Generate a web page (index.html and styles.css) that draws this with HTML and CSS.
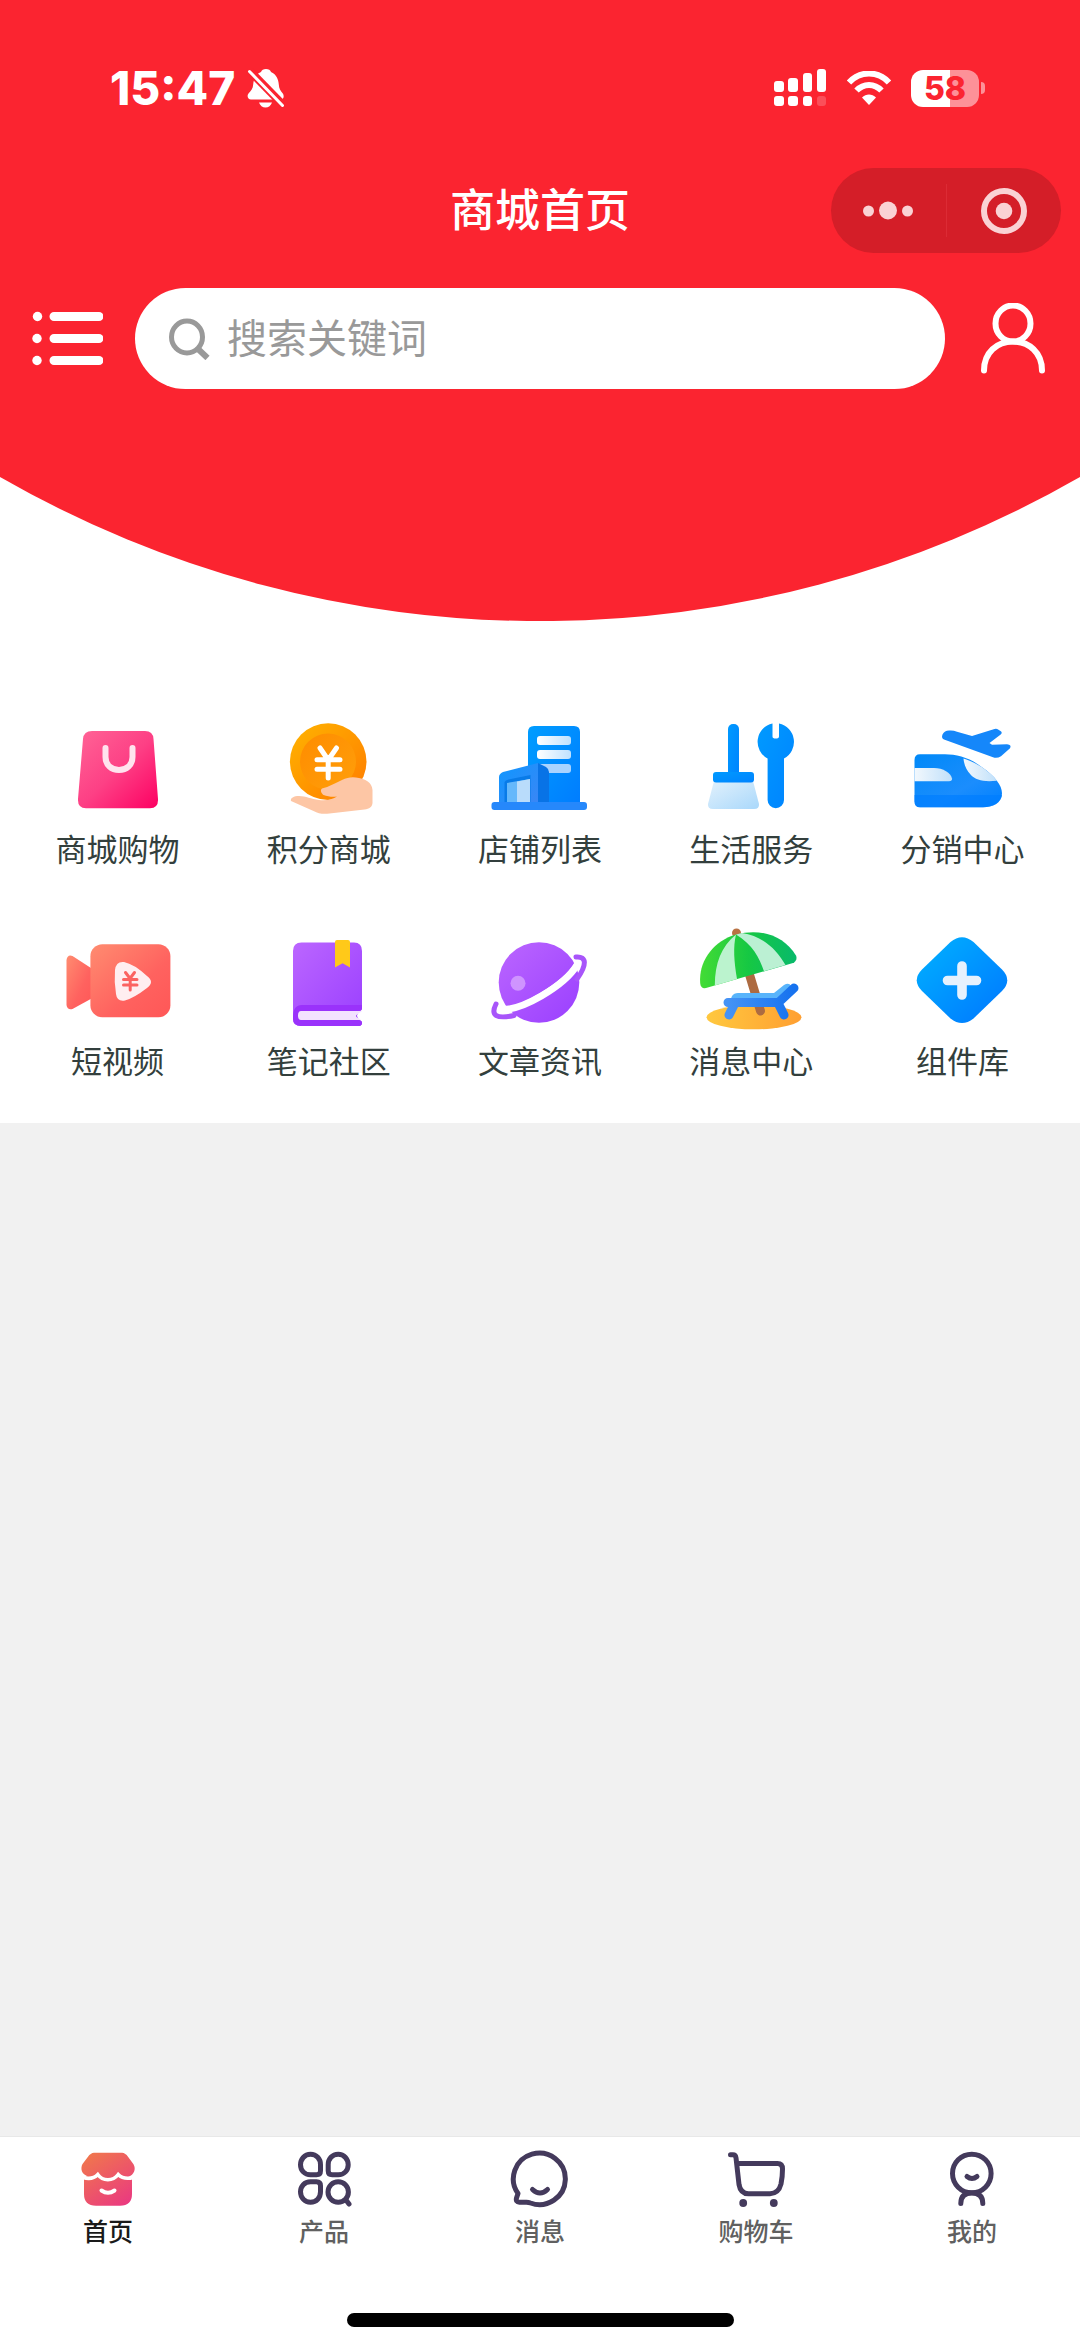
FILE: index.html
```html
<!DOCTYPE html>
<html lang="zh-CN">
<head>
    <meta charset="UTF-8">
    <meta name="viewport" content="width=device-width, initial-scale=1.0">
    <title>商城首页</title>
    <link rel="stylesheet" href="styles.css">
</head>
<body>
    <header class="hero">
        <div class="status-bar">
            <div class="status-left">
                <span class="time">15:47</span>
                <svg class="bell" viewBox="0 0 38 40">
                    <path d="M19 1c2.500 0 4.500 1.200 5 3 5 2 7.500 7 7.800 12.500.2 4 1.700 6.500 4 9 1.500 1.700 1.200 6-2 6H4c-3 0-4.500-3.500-2.500-6 2.500-2.800 4.500-5 4.700-9C6.500 11 9 6 14 4c.5-1.800 2.500-3 5-3zM12 34.500h13c-1 3-3.500 5-6.500 5s-5.500-2-6.500-5z" fill="#fff"/>
                    <path d="M1 1l38 39" stroke="#fb2430" stroke-width="8"/>
                    <path d="M2.500 3.500l33 34" stroke="#fff" stroke-width="3" stroke-linecap="round"/>
                </svg>
            </div>
            <div class="status-right">
                <svg class="signal" viewBox="0 0 53 38" fill="#fff">
                    <rect x="0" y="12" width="10" height="11" rx="3"/>
                    <rect x="14" y="9" width="10" height="14" rx="3"/>
                    <rect x="29" y="4" width="9" height="19" rx="3"/>
                    <rect x="43" y="0" width="9" height="23" rx="3"/>
                    <rect x="0" y="27" width="10" height="10" rx="3"/>
                    <rect x="14" y="27" width="10" height="10" rx="3"/>
                    <rect x="29" y="27" width="9" height="10" rx="3"/>
                    <rect x="43" y="27" width="9" height="10" rx="3" opacity=".2"/>
                </svg>
                <svg class="wifi" viewBox="0 0 46 34">
                    <path d="M3 11.500C14-.5 32-.5 43 11.500" fill="none" stroke="#fff" stroke-width="6"/>
                    <path d="M10.500 19.500C17.500 12 28.500 12 35.500 19.500" fill="none" stroke="#fff" stroke-width="6"/>
                    <path d="M23 34l-7-7.500c4-4 10-4 14 0z" fill="#fff"/>
                </svg>
                <div class="battery"><span class="battery-body">58</span><span class="battery-tip"></span></div>
            </div>
        </div>

        <div class="nav-bar">
            <h1 class="nav-title">商城首页</h1>
            <div class="capsule">
                <button class="capsule-btn" type="button" aria-label="更多">
                    <svg width="50" height="48" viewBox="0 0 50 48" fill="#fad2d4">
                        <circle cx="5.500" cy="24" r="5.500"/><circle cx="25" cy="23.500" r="9"/><circle cx="44.500" cy="24" r="5.500"/>
                    </svg>
                </button>
                <button class="capsule-btn" type="button" aria-label="关闭">
                    <svg width="48" height="48" viewBox="0 0 48 48">
                        <circle cx="24" cy="24" r="20" fill="none" stroke="#fad2d4" stroke-width="6"/>
                        <circle cx="24" cy="24" r="8.300" fill="#fad2d4"/>
                    </svg>
                </button>
            </div>
        </div>

        <div class="search-row">
            <button class="icon-btn" type="button" aria-label="分类">
                <svg width="72" height="72" viewBox="0 0 72 72" fill="#fff">
                    <circle cx="6.500" cy="13.500" r="4.700"/><circle cx="6" cy="35.500" r="4.700"/><circle cx="6" cy="57.500" r="4.700"/>
                    <path d="M23 13.500h45M23 35.500h45M23 57.500h45" stroke="#fff" stroke-width="9" stroke-linecap="round"/>
                </svg>
            </button>
            <label class="search-box">
                <svg class="search-icon" viewBox="0 0 42 42" fill="none" stroke="#999" stroke-width="5">
                    <ellipse cx="18" cy="19" rx="15.500" ry="16"/>
                    <path d="M28 30l10.500 10" stroke-width="6"/>
                </svg>
                <input class="search-input" type="search" placeholder="搜索关键词" aria-label="搜索关键词">
            </label>
            <button class="icon-btn" type="button" aria-label="个人中心">
                <svg width="72" height="72" viewBox="0 0 72 72" fill="none" stroke="#fff" stroke-width="6" stroke-linecap="round">
                    <ellipse cx="36" cy="20.500" rx="17.500" ry="18"/>
                    <path d="M7 67.500c0-18 13-29 29-29s29 11 29 29"/>
                </svg>
            </button>
        </div>
    </header>
    <svg class="hero-curve" viewBox="0 0 1080 144"><path d="M0 0A1084 1084 0 0 0 1080 0z" fill="#fb2430"/></svg>

    <nav class="menu">
        <a class="menu-item" href="#">
            <svg class="menu-icon" viewBox="0 0 108 108">
                <defs><linearGradient id="bag" x1="0" y1="0" x2="1" y2="1"><stop offset="0" stop-color="#ff6496"/><stop offset=".5" stop-color="#fd4085"/><stop offset="1" stop-color="#fd0062"/></linearGradient></defs>
                <path d="M28 16h53q8 0 8.500 8L94 84q.5 9-8 9.300H22q-8.500-.3-8-9.300L19 24q.7-8 9-8z" fill="url(#bag)"/>
                <path d="M41.500 33v9c0 8 6 13 13.500 13s13.500-5 13.500-13v-9" fill="none" stroke="#ffe3ee" stroke-width="6" stroke-linecap="round"/>
            </svg>
            <span class="menu-text">商城购物</span>
        </a>
        <a class="menu-item" href="#">
            <svg class="menu-icon" viewBox="0 0 108 108">
                <defs>
                    <linearGradient id="coin" x1="0" y1="0" x2="1" y2="1"><stop offset="0" stop-color="#ffb400"/><stop offset="1" stop-color="#ff7b00"/></linearGradient>
                    <linearGradient id="coinIn" x1="0" y1="0" x2="1" y2="1"><stop offset="0" stop-color="#ff8c00"/><stop offset="1" stop-color="#ff9f0a"/></linearGradient>
                </defs>
                <circle cx="53.200" cy="46.600" r="38.300" fill="url(#coin)"/>
                <circle cx="53" cy="46.600" r="28" fill="url(#coinIn)"/>
                <path d="M45 33l8.200 12L61.500 33M42 44.700h23M42 54.300h23M53.200 45v18" fill="none" stroke="#fff" stroke-width="5" stroke-linecap="round" stroke-linejoin="round"/>
                <path d="M16 86c-1-3 3-5 8-5 7 0 12 3 20 4 7 .8 14-.5 18-3.500-4 .5-9 .3-13.500-1.500-2.500-2-3.500-5-1.500-6.500C54 72 60 68 67 65c6-3 11-3.500 17-2 6 1 13 4 13.500 12V88c-.5 4-3 6-8 6.500l-35 4c-6 .7-11 .3-16-2.500z" fill="#fdc6a5"/>
            </svg>
            <span class="menu-text">积分商城</span>
        </a>
        <a class="menu-item" href="#">
            <svg class="menu-icon" viewBox="0 0 108 108">
                <defs>
                    <linearGradient id="tower" x1="0" y1="0" x2="1" y2="1"><stop offset="0" stop-color="#009dff"/><stop offset="1" stop-color="#007dff"/></linearGradient>
                    <linearGradient id="slat" x1="0" y1="0" x2="1" y2="0"><stop offset="0" stop-color="#fff"/><stop offset="1" stop-color="#bfe1ff"/></linearGradient>
                    <linearGradient id="front" x1="0" y1="0" x2="1" y2="1"><stop offset="0" stop-color="#0d97ff"/><stop offset="1" stop-color="#3b86f5"/></linearGradient>
                </defs>
                <path d="M42 88V17q0-6 6-6h40q6 0 6 6v71z" fill="url(#tower)"/>
                <rect x="51" y="21" width="34" height="9" rx="3" fill="url(#slat)"/>
                <rect x="51" y="35" width="34" height="9" rx="3" fill="url(#slat)"/>
                <rect x="51" y="49" width="34" height="9" rx="3" fill="#a9d3ff"/>
                <path d="M52 48l8 4q3 2 3 5v31H52z" fill="#0873e6"/>
                <path d="M13 88V62q0-3 4-5l35-9v40z" fill="url(#front)"/>
                <path d="M18.500 87V67q1-2 4-2.500l22-4.500v27z" fill="#087be8"/>
                <path d="M21 87V68l23-4v23z" fill="#65b8fb"/>
                <path d="M31 87V66.500l13-2.500v23z" fill="#b9dcfb"/>
                <rect x="5.500" y="87" width="95.500" height="8" rx="3" fill="#2688fb"/>
            </svg>
            <span class="menu-text">店铺列表</span>
        </a>
        <a class="menu-item" href="#">
            <svg class="menu-icon" viewBox="0 0 108 108">
                <defs>
                    <linearGradient id="tool" x1="0" y1="0" x2="1" y2="1"><stop offset="0" stop-color="#009aff"/><stop offset="1" stop-color="#0083ff"/></linearGradient>
                    <linearGradient id="brush" x1="0" y1="0" x2="1" y2="1"><stop offset="0" stop-color="#e2f1fc"/><stop offset="1" stop-color="#a9d8fb"/></linearGradient>
                </defs>
                <path d="M17 66h39l6 23q.5 5-5 5H16q-5.500 0-5-5z" fill="url(#brush)"/>
                <rect x="31" y="9" width="11" height="55" rx="5" fill="url(#tool)"/>
                <rect x="16" y="57" width="41" height="10.500" rx="3" fill="url(#tool)"/>
                <path d="M75.500 8.500v13q0 2 3.200 2t3.300-2v-13A18.800 18.800 0 0 1 87 43.500V85a8.200 8.200 0 0 1-16.400 0V43.500A18.800 18.800 0 0 1 75.500 8.500z" fill="url(#tool)"/>
            </svg>
            <span class="menu-text">生活服务</span>
        </a>
        <a class="menu-item" href="#">
            <svg class="menu-icon" viewBox="0 0 108 108">
                <defs>
                    <linearGradient id="train" x1="0" y1="0" x2="1" y2="1"><stop offset="0" stop-color="#0089f8"/><stop offset=".6" stop-color="#1b8dfd"/><stop offset="1" stop-color="#0080ff"/></linearGradient>
                    <linearGradient id="glass" x1="0" y1="0" x2="1" y2="0"><stop offset="0" stop-color="#f2f8fd"/><stop offset="1" stop-color="#c0e0fa"/></linearGradient>
                </defs>
                <path d="M12 39.300h25c12 0 26 4 37 13 13 9 20 18 20 26 0 9-9 14-19 14H12q-5.500 0-5.500-6V45q0-5.700 5.500-5.700z" fill="url(#train)"/>
                <path d="M6.500 80H94c-1 8-9 12.300-19 12.300H12q-5.500 0-5.500-6z" fill="#007dff" opacity=".7"/>
                <path d="M6.500 53H26c9 0 17 5 18 10.500q.3 2.800-3 2.800H6.500z" fill="url(#glass)"/>
                <path d="M55.500 43.500c9 3 23 9 33.500 22.200-13 1.300-21-.2-26.500-6.200-4-4.500-6.500-9.500-7-16z" fill="url(#glass)"/>
                <path d="M36 24.500q-3-1.500-1.500-5 2-4 6.500-4 4-.5 8 1.200l15 4.300 22.500-7q2-.8 4 .8l2.700 1.700q1.500 1.500-.5 3L81.500 28l2.500 1.800L99 29.300q5 .5 3 4l-9 8q-4 2.400-8 1z" fill="#1587fa"/>
            </svg>
            <span class="menu-text">分销中心</span>
        </a>
        <a class="menu-item" href="#">
            <svg class="menu-icon" viewBox="0 0 108 108">
                <defs><linearGradient id="video" x1="0" y1="0" x2="1" y2="1"><stop offset="0" stop-color="#ff8c70"/><stop offset=".6" stop-color="#ff625f"/><stop offset="1" stop-color="#ff5757"/></linearGradient></defs>
                <path d="M2.500 33q1-6 6-4l20 13v29l-20 11q-5 1.500-6-4z" fill="url(#video)"/>
                <rect x="26.400" y="17.300" width="80" height="73" rx="12" fill="url(#video)"/>
                <path d="M51 43q1-9 9-8 10 2 23 14 8 6 0 12-13 10-22 12.500-8 1.500-9-6.500-2-12-1-24z" fill="#ffeef0"/>
                <path d="M61.500 45.500l4.500 6 4.500-6M59.500 52.500h13.500M59.500 58h13.500M66.200 52v11" fill="none" stroke="#fb6361" stroke-width="3" stroke-linecap="round"/>
            </svg>
            <span class="menu-text">短视频</span>
        </a>
        <a class="menu-item" href="#">
            <svg class="menu-icon" viewBox="0 0 108 108">
                <defs><linearGradient id="book" x1="0" y1="0" x2="1" y2="1"><stop offset="0" stop-color="#bb66ff"/><stop offset="1" stop-color="#9a3fff"/></linearGradient></defs>
                <path d="M18 88V24q0-8.500 8.500-8.500H79q8 0 8 8.500v57q0 2.500-3 3-4 4.500 0 9 3 .5 3 3t-3 3H26q-8 0-8-7z" fill="url(#book)"/>
                <path d="M18 90q0-12 9-12h60v3q0 3-3 3-4 4.500 0 9 3 .5 3 3t-3 3H26q-8 0-8-7z" fill="#9a32fb"/>
                <path d="M26 84h61l-4 3q-4 2 0 4l3 2H26q-3 0-3-4.500t3-4.500z" fill="#f3e2ff"/>
                <path d="M60 15q0-2 2-2h11q2 0 2 2v25.500l-7.400-4.200L60 40.500z" fill="#ffc919"/>
            </svg>
            <span class="menu-text">笔记社区</span>
        </a>
        <a class="menu-item" href="#">
            <svg class="menu-icon" viewBox="0 0 108 108" fill="none" stroke-linecap="round">
                <circle cx="53" cy="55.500" r="40.300" fill="url(#book)"/>
                <circle cx="32" cy="56.300" r="7.500" fill="#cf94ff"/>
                <path d="M12.500 82C34 86 79 58 91 38" stroke="#fff" stroke-width="7"/>
                <path d="M90 30c11-1 11 8 1 22" stroke="#a855fa" stroke-width="5"/>
                <path d="M10 77c-6 12 1 15 18 11.500" stroke="#a855fa" stroke-width="5"/>
                <path d="M14 82.500C34 85 80 56 91 37" stroke="#fff" stroke-width="5"/>
            </svg>
            <span class="menu-text">文章资讯</span>
        </a>
        <a class="menu-item" href="#">
            <svg class="menu-icon" viewBox="0 0 108 108">
                <defs>
                    <linearGradient id="sand" x1="0" y1="0" x2="1" y2="0"><stop offset="0" stop-color="#ffc83f"/><stop offset="1" stop-color="#ff9f31"/></linearGradient>
                    <linearGradient id="canopy" x1="0" y1="0" x2="1" y2="0"><stop offset="0" stop-color="#43dc35"/><stop offset=".5" stop-color="#16c843"/><stop offset="1" stop-color="#08b96b"/></linearGradient>
                    <linearGradient id="lounger" x1="0" y1="0" x2="1" y2="0"><stop offset="0" stop-color="#4593f5"/><stop offset="1" stop-color="#1672ef"/></linearGradient>
                </defs>
                <ellipse cx="57" cy="90.300" rx="47.500" ry="12" fill="url(#sand)"/>
                <path d="M52 46l11.500 38" stroke="#ad6b41" stroke-width="9" stroke-linecap="round"/>
                <circle cx="39.500" cy="6" r="4.500" fill="#b97243"/>
                <path d="M39 7.500c26-7 48 2 60 21 1.500 4-.5 6.500-3 7.500L9 61q-5 1-5.700-4C1 35 16 14 39 7.500z" fill="url(#canopy)"/>
                <path d="M39 7.500C24 20 18 36 17.800 58.500L40 52C37 34 36 20 39 7.500z" fill="#bbf3ce"/>
                <path d="M39 7.500C56 18 62 30 67 44.300L88.500 38C80 23 66 9 45 6z" fill="#bbf0d3"/>
                <path d="M33 74l2-5q2-3 6-3h36l10-8q5-3 7 1L82 74z" fill="#58b4fb"/>
                <path d="M31 75.500h50.500L97 61M37 78l-5 10M82 78l5 10" fill="none" stroke="url(#lounger)" stroke-width="9" stroke-linecap="round" stroke-linejoin="round"/>
            </svg>
            <span class="menu-text">消息中心</span>
        </a>
        <a class="menu-item" href="#">
            <svg class="menu-icon" viewBox="0 0 108 108">
                <defs><linearGradient id="plus" x1="0" y1="0" x2="1" y2="1"><stop offset=".2" stop-color="#00a6ff"/><stop offset=".8" stop-color="#0082ff"/></linearGradient></defs>
                <path d="M42.500 15Q54 5.500 65.500 15L94 42.500Q104.500 53 94 64L65.500 91.500Q54 100.500 42.500 91.500L14 64Q3.500 53 14 42.500z" fill="url(#plus)"/>
                <path d="M39.500 53.500h29M54 39v29" stroke="#e6f1fd" stroke-width="9.600" stroke-linecap="round"/>
            </svg>
            <span class="menu-text">组件库</span>
        </a>
    </nav>

    <main class="content"></main>

    <footer class="tab-bar">
        <nav class="tabs">
            <a class="tab active" href="#">
                <svg class="tab-icon" viewBox="0 0 60 60">
                    <defs><linearGradient id="shop" gradientUnits="userSpaceOnUse" x1="12" y1="4" x2="48" y2="56"><stop offset="0" stop-color="#f0764d"/><stop offset="1" stop-color="#ea3a80"/></linearGradient></defs>
                    <path d="M16 3.700h28q3.500.3 6 4l5.500 7.500c3 5 0 11-4.500 12l3 2V45q0 11.700-12 11.700H18Q6 56.700 6 45V29l3-2C4 25 2 20 4.500 15L10 7.700q2.500-3.700 6-4z" fill="url(#shop)"/>
                    <path d="M5 28.500c7 2 12 0 14.800-3 5 7 15 7 20.400 0 3 3 8 5 15 3" fill="none" stroke="#fff" stroke-width="3.500"/>
                    <path d="M23.500 41.500q6.500 4.500 13 0" fill="none" stroke="#fff" stroke-width="4" stroke-linecap="round"/>
                </svg>
                <span class="tab-text">首页</span>
            </a>
            <a class="tab" href="#">
                <svg class="tab-icon" viewBox="0 0 60 60">
                    <path d="M16.500 5.300c6 0 10 4.500 10 10.500v6q0 4-4 4h-6c-6 0-10-4.500-10-10s4-10.500 10-10.500zM44.200 5.300c-6 0-10 4.500-10 10.500v6q0 4 4 4h6c6 0 10-4.500 10-10s-4-10.500-10-10.500zM16.500 53.300c6 0 10-4.500 10-10.500v-6q0-4-4-4h-6c-6 0-10 4.500-10 10s4 10.500 10 10.500z"/>
                    <circle cx="44.200" cy="43" r="10.200"/>
                    <path d="M52 51l3 4"/>
                </svg>
                <span class="tab-text">产品</span>
            </a>
            <a class="tab" href="#">
                <svg class="tab-icon" viewBox="0 0 60 60">
                    <path d="M8 44.500A26 25.700 0 1 1 20.500 54Q18 53 15 53.300H9.500Q5.500 53 6.500 49z"/>
                    <path d="M22.500 40.500q7.500 7 15 0"/>
                </svg>
                <span class="tab-text">消息</span>
            </a>
            <a class="tab" href="#">
                <svg class="tab-icon cart" viewBox="0 0 60 60">
                    <path d="M4.500 5.800H7q2.500 0 3 3L13 35.500q1.500 9.200 9.500 9.200H44Q52.500 44.700 55 35q1.500-7 1.500-15 0-5.500-5-5.500H11"/>
                    <circle class="dot" cx="17.200" cy="54" r="3.900"/>
                    <circle class="dot" cx="47.800" cy="54" r="3.900"/>
                </svg>
                <span class="tab-text">购物车</span>
            </a>
            <a class="tab" href="#">
                <svg class="tab-icon" viewBox="0 0 60 60">
                    <circle cx="29.800" cy="24.500" r="19.300"/>
                    <path d="M18.800 54.500c0-7 4-10.500 11-10.500s11 3.500 11 10.500M25 27.500q5 4 10 0"/>
                </svg>
                <span class="tab-text">我的</span>
            </a>
        </nav>
        <div class="home-indicator"></div>
    </footer>
</body>
</html>
```
FILE: styles.css
```css
* {
    box-sizing: border-box;
}
body {
    margin: 0;
    min-height: 100vh;
    display: flex;
    flex-direction: column;
    background-color: #fff;
    font-family: Inter, 'Noto Sans CJK SC', sans-serif;
}
a {
    text-decoration: none;
}
button {
    padding: 0;
    border: none;
    background: none;
    cursor: pointer;
}
svg {
    display: block;
    flex-shrink: 0;
}

/* header */
.hero {
    background-color: #fb2430;
    color: #fff;
    padding: 34px 0 88px;
}
.hero-curve {
    width: 100%;
}
.status-bar {
    display: flex;
    justify-content: space-between;
    align-items: center;
    height: 108px;
    padding: 0 95px 0 110px;
}
.status-left,
.status-right {
    display: flex;
    align-items: center;
}
.status-left {
    gap: 12px;
}
.status-right {
    gap: 19px;
}
.time {
    font-size: 46px;
    font-weight: 800;
}
.bell {
    width: 38px;
    height: 40px;
}
.signal {
    width: 53px;
    height: 38px;
}
.wifi {
    width: 46px;
    height: 34px;
}
.battery {
    display: flex;
    align-items: center;
    gap: 2px;
}
.battery-body {
    width: 68px;
    line-height: 37px;
    border-radius: 12px;
    background: linear-gradient(90deg, #fff 57%, #fd9198 57%);
    color: #fb2430;
    font-size: 32px;
    font-weight: 800;
    text-align: center;
}
.battery-tip {
    width: 4px;
    height: 12px;
    border-radius: 0 4px 4px 0;
    background-color: #fd9198;
}
.nav-bar {
    display: grid;
    grid-template-columns: 1fr auto 1fr;
    align-items: center;
    padding: 26px 19px 35px;
}
.nav-title {
    grid-column: 2;
    margin: 0;
    font-size: 45px;
    font-weight: 500;
    line-height: 64px;
}
.capsule {
    justify-self: end;
    display: flex;
    align-items: center;
    width: 230px;
    height: 85px;
    border-radius: 43px;
    background-color: #d41e28;
}
.capsule-btn {
    flex: 1;
    display: flex;
    justify-content: center;
    align-items: center;
    height: 53px;
}
.capsule-btn + .capsule-btn {
    border-left: 1px solid #dc2b35;
}
.search-row {
    display: flex;
    align-items: center;
    gap: 32px;
    padding: 0 31px;
}
.search-box {
    flex: 1;
    display: flex;
    align-items: center;
    gap: 16px;
    height: 101px;
    padding: 0 34px;
    border-radius: 51px;
    background-color: #fff;
}
.search-icon {
    width: 42px;
    height: 42px;
}
.search-input {
    flex: 1;
    min-width: 0;
    padding: 0;
    border: none;
    outline: none;
    background: none;
    color: #333;
    font-family: inherit;
    font-size: 40px;
}
.search-input::placeholder {
    color: #999;
}

/* menu grid */
.menu {
    display: grid;
    grid-template-columns: repeat(5, 1fr);
    row-gap: 50px;
    padding: 94px 12px 34px;
}
.menu-item {
    display: flex;
    flex-direction: column;
    align-items: center;
}
.menu-icon {
    width: 108px;
    height: 108px;
}
.menu-text {
    color: #333f3d;
    font-size: 31px;
    line-height: 54px;
}

.content {
    flex: 1;
    background-color: #f1f1f1;
}

/* bottom tabs */
.tab-bar {
    border-top: 1px solid #e8e8e8;
    background-color: #fff;
    padding: 12px 0 21px;
}
.tabs {
    display: flex;
}
.tab {
    flex: 1;
    display: flex;
    flex-direction: column;
    align-items: center;
    gap: 4px;
    color: #606060;
}
.tab.active {
    color: #1a1a1a;
}
.tab-icon {
    width: 60px;
    height: 60px;
    fill: none;
}
.tab:not(.active) .tab-icon {
    stroke: #443a5c;
    stroke-width: 5;
    stroke-linecap: round;
    stroke-linejoin: round;
}
.tab .cart {
    stroke-width: 4;
}
.tab .dot {
    fill: #443a5c;
    stroke: none;
}
.tab-text {
    font-size: 25px;
    font-weight: 500;
    line-height: 38px;
}
.home-indicator {
    width: 387px;
    height: 14px;
    margin: 62px auto 0;
    border-radius: 7px;
    background-color: #000;
}
```
